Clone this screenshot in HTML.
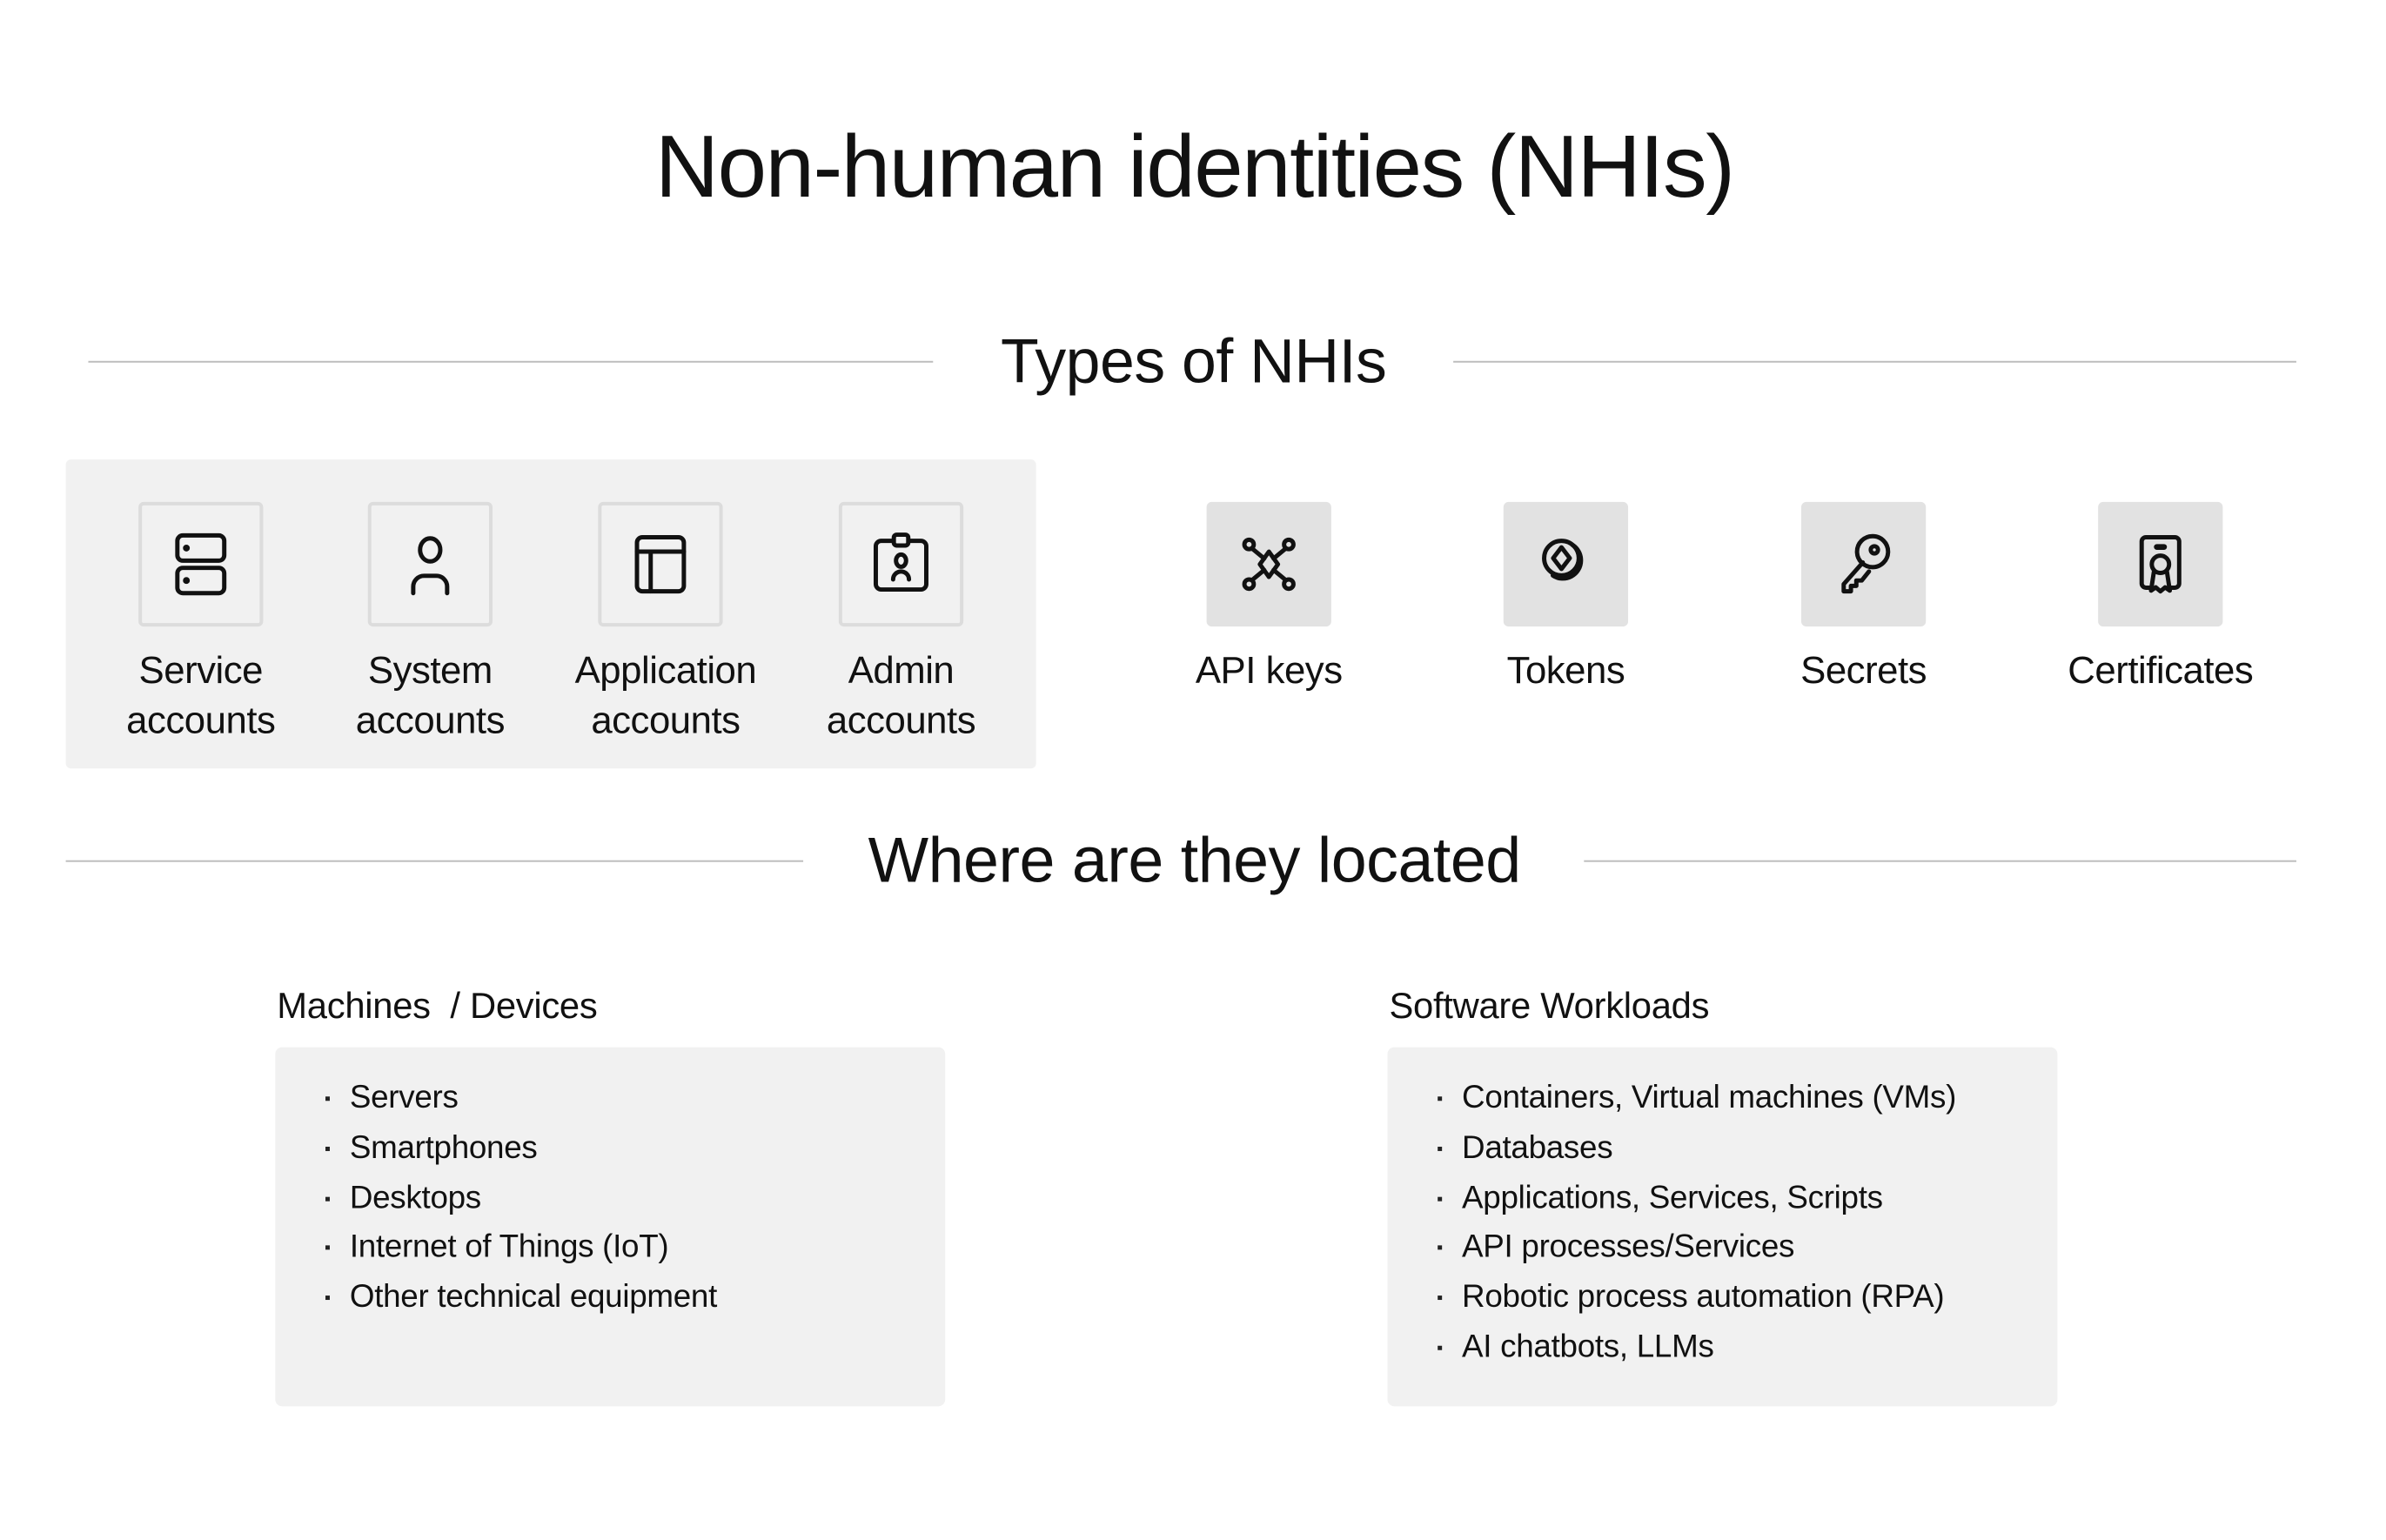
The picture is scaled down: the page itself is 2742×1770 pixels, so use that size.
<!DOCTYPE html>
<html><head><meta charset="utf-8"><style>
*{margin:0;padding:0;box-sizing:border-box}
body{width:2742px;height:1770px;background:#fff;position:relative;overflow:hidden;font-family:"Liberation Sans",sans-serif;color:#111}
#w{position:absolute;left:0;top:0;width:2742px;height:1770px;transform:scale(0.9947);transform-origin:0 0}
.a{position:absolute}
.c{position:absolute;transform:translateX(-50%);text-align:center;white-space:nowrap}
.line{position:absolute;height:2px;background:#bdbdbd}
.ib{position:absolute;width:144px;height:144px;border-radius:6px;display:flex;align-items:center;justify-content:center}
.ol{border:4px solid #dcdcdc;background:#f1f1f1}
.fl{background:#e2e2e2}
.lab{font-size:44px;line-height:58px;letter-spacing:-0.5px}
.box{position:absolute;background:#f1f1f1;border-radius:8px}
.it{position:absolute;font-size:37px;white-space:nowrap;letter-spacing:-0.3px}
.it::before{content:"";position:absolute;left:-28px;top:20px;width:5px;height:5px;background:#222}
svg{width:100px;height:100px;fill:none;stroke:#111;stroke-width:1.2;stroke-linecap:round;stroke-linejoin:round}
</style></head><body><div id="w">
<div class="c" style="left:1380px;top:134px;font-size:102px;letter-spacing:-1.5px;line-height:116px">Non-human identities (NHIs)</div>

<div class="line" style="left:102px;top:417px;width:976px"></div>
<div class="line" style="left:1679px;top:417px;width:974px"></div>
<div class="c" style="left:1379px;top:376px;font-size:72px;line-height:84px;letter-spacing:-0.5px">Types of NHIs</div>

<div class="box" style="left:76px;top:531px;width:1121px;height:357px;border-radius:6px"></div>

<div class="ib ol" style="left:160px;top:580px"><svg viewBox="0 0 24 24"><rect x="5.5" y="4" width="13" height="7" rx="1.5"/><rect x="5.5" y="13" width="13" height="7" rx="1.5"/><circle cx="8" cy="7.5" r=".35" fill="#111"/><circle cx="8" cy="16.5" r=".35" fill="#111"/></svg></div>
<div class="ib ol" style="left:425px;top:580px"><svg viewBox="0 0 24 24"><ellipse cx="12" cy="8" rx="2.8" ry="3.2"/><path d="M7.3 20v-1.8a3 3 0 0 1 3-3h3.4a3 3 0 0 1 3 3V20"/></svg></div>
<div class="ib ol" style="left:691px;top:580px"><svg viewBox="0 0 24 24"><rect x="5.5" y="4.5" width="13" height="15" rx="1.5"/><path d="M5.5 8.5h13M9.3 8.5v11"/></svg></div>
<div class="ib ol" style="left:969px;top:580px"><svg viewBox="0 0 24 24"><rect x="5" y="5.5" width="14" height="13.5" rx="1.5"/><rect x="10" y="3.8" width="4" height="3" rx=".8" fill="#f1f1f1"/><ellipse cx="12" cy="11" rx="1.4" ry="1.7"/><path d="M9.8 16.2a2.2 2.2 0 0 1 4.4 0"/></svg></div>

<div class="c lab" style="left:232px;top:746px">Service<br>accounts</div>
<div class="c lab" style="left:497px;top:746px">System<br>accounts</div>
<div class="c lab" style="left:769px;top:746px">Application<br>accounts</div>
<div class="c lab" style="left:1041px;top:746px">Admin<br>accounts</div>

<div class="ib fl" style="left:1394px;top:580px"><svg viewBox="0 0 24 24"><path d="M12 8.5l2.5 3.5-2.5 3.5-2.5-3.5z"/><circle cx="6.5" cy="6.5" r="1.3"/><circle cx="17.5" cy="6.5" r="1.3"/><circle cx="6.5" cy="17.5" r="1.3"/><circle cx="17.5" cy="17.5" r="1.3"/><path d="M7.3 7.6l3.4 2.8M16.7 7.6l-3.4 2.8M7.3 16.4l3.4-2.8M16.7 16.4l-3.4-2.8"/></svg></div>
<div class="ib fl" style="left:1737px;top:580px"><svg viewBox="0 0 24 24"><circle cx="10.8" cy="10.3" r="4.8"/><path d="M10.8 7.3l2.3 3-2.3 3-2.3-3z"/><path d="M13.8 6.6a5 5 0 0 1 2.4 4.4 5 5 0 0 1-7.8 4.1"/></svg></div>
<div class="ib fl" style="left:2081px;top:580px"><svg viewBox="0 0 24 24"><circle cx="14.5" cy="8.5" r="4.3"/><circle cx="15" cy="8" r="1"/><path d="M11.8 11.5L6.5 17.5v2h2v-1.5h1.5v-1.5h1.5l2-2.5"/></svg></div>
<div class="ib fl" style="left:2424px;top:580px"><svg viewBox="0 0 24 24"><path d="M9.5 18.5H8a1.2 1.2 0 0 1-1.2-1.2V5.7A1.2 1.2 0 0 1 8 4.5h8a1.2 1.2 0 0 1 1.2 1.2v11.6a1.2 1.2 0 0 1-1.2 1.2h-1.5"/><path d="M11 7.2h2" stroke-width="1.6"/><circle cx="12" cy="12" r="2.4"/><path d="M10.2 14l-.8 5.3 1.3-.9 1.3 1.1 1.3-1.1 1.3.9-.8-5.3"/></svg></div>

<div class="c lab" style="left:1466px;top:746px">API keys</div>
<div class="c lab" style="left:1809px;top:746px">Tokens</div>
<div class="c lab" style="left:2153px;top:746px">Secrets</div>
<div class="c lab" style="left:2496px;top:746px">Certificates</div>

<div class="line" style="left:76px;top:994px;width:852px"></div>
<div class="line" style="left:1830px;top:994px;width:823px"></div>
<div class="c" style="left:1380px;top:951px;font-size:74px;line-height:86px;letter-spacing:-0.5px">Where are they located</div>

<div class="a" style="left:320px;top:1137px;font-size:42px;line-height:50px;letter-spacing:-0.3px">Machines&nbsp; / Devices</div>
<div class="a" style="left:1605px;top:1137px;font-size:42px;line-height:50px;letter-spacing:-0.3px">Software Workloads</div>

<div class="box" style="left:318px;top:1210px;width:774px;height:415px"></div>
<div class="box" style="left:1603px;top:1210px;width:774px;height:415px"></div>

<div class="it" style="left:404px;top:1247px">Servers</div>
<div class="it" style="left:404px;top:1305px">Smartphones</div>
<div class="it" style="left:404px;top:1363px">Desktops</div>
<div class="it" style="left:404px;top:1419px">Internet of Things (IoT)</div>
<div class="it" style="left:404px;top:1477px">Other technical equipment</div>

<div class="it" style="left:1689px;top:1247px">Containers, Virtual machines (VMs)</div>
<div class="it" style="left:1689px;top:1305px">Databases</div>
<div class="it" style="left:1689px;top:1363px">Applications, Services, Scripts</div>
<div class="it" style="left:1689px;top:1419px">API processes/Services</div>
<div class="it" style="left:1689px;top:1477px">Robotic process automation (RPA)</div>
<div class="it" style="left:1689px;top:1535px">AI chatbots, LLMs</div>
</div></body></html>
